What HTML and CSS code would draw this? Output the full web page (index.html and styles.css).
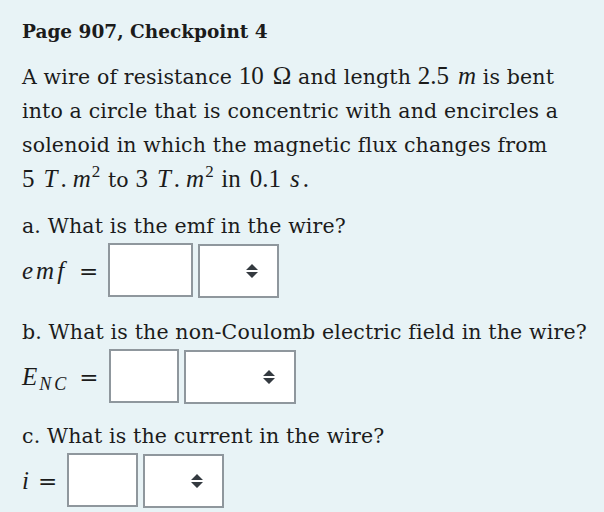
FILE: index.html
```html
<!DOCTYPE html>
<html>
<head>
<meta charset="utf-8">
<link rel="stylesheet" href="styles.css">
</head>
<body>
<main class="page">
  <h2 class="title">Page 907, Checkpoint 4</h2>
  <p class="stem">A wire of resistance <span class="m">10<span class="gap"></span>Ω</span> and length <span class="m">2.5<span class="gap"></span><i class="mi">m</i></span> is bent<br>into a circle that is concentric with and encircles a<br>solenoid in which the magnetic flux changes from<br><span class="m">5<i class="mi t">T</i><span class="dot">.</span><i class="mi mm">m</i><sup>2</sup></span> to <span class="m">3<i class="mi t">T</i><span class="dot">.</span><i class="mi mm">m</i><sup>2</sup></span> <span class="m">in<span class="gap"></span>0.1<span class="gap"></span><i class="mi">s</i><span class="dot">.</span></span></p>

  <section class="q qa">
    <p class="qtext">a. What is the emf in the wire?</p>
    <div class="row">
      <span class="lbl m"><i class="mi emf">emf</i><span class="eq">=</span></span>
      <span class="box w85"></span>
      <span class="sel w81"><svg class="arr" viewBox="0 0 12 14" width="12" height="14"><path d="M6 0 L12 6 L0 6 Z M0 8 L12 8 L6 14 Z" fill="#343a40"/></svg></span>
    </div>
  </section>

  <section class="q qb">
    <p class="qtext">b. What is the non-Coulomb electric field in the wire?</p>
    <div class="row">
      <span class="lbl m"><i class="mi bigE">E</i><sub><i class="mi nc">NC</i></sub><span class="eq">=</span></span>
      <span class="box w70"></span>
      <span class="sel w112"><svg class="arr" viewBox="0 0 12 14" width="12" height="14"><path d="M6 0 L12 6 L0 6 Z M0 8 L12 8 L6 14 Z" fill="#343a40"/></svg></span>
    </div>
  </section>

  <section class="q qc">
    <p class="qtext">c. What is the current in the wire?</p>
    <div class="row">
      <span class="lbl m"><i class="mi ii">i</i><span class="eq">=</span></span>
      <span class="box w71"></span>
      <span class="sel w81"><svg class="arr" viewBox="0 0 12 14" width="12" height="14"><path d="M6 0 L12 6 L0 6 Z M0 8 L12 8 L6 14 Z" fill="#343a40"/></svg></span>
    </div>
  </section>
</main>
</body>
</html>
```

FILE: styles.css
```css
html, body {
  margin: 0;
  padding: 0;
  background: #e8f3f6;
}
.page {
  padding: 16px 0 0 22px;
  font-family: "DejaVu Serif", serif;
  color: #1b1b1b;
}
.title {
  margin: 0;
  font-size: 18.5px;
  line-height: 32px;
  font-weight: bold;
}
.stem {
  margin: 11px 0 0 0;
  line-height: 34px;
  font-size: 20.5px;
  letter-spacing: 0.15px;
  white-space: nowrap;
}
.m {
  font-family: "Liberation Serif", serif;
  font-size: 25px;
  letter-spacing: 0;
}
.mi {
  font-style: italic;
}
.gap {
  display: inline-block;
  width: 9px;
}
.t {
  margin-left: 9px;
}
.dot {
  margin-left: 3px;
}
.mm {
  margin-left: 6px;
  margin-right: 1px;
}
.m sup {
  font-size: 17px;
  line-height: 0;
  vertical-align: 10px;
  margin-right: 1px;
}
.qtext {
  margin: 0;
  line-height: 30px;
  font-size: 20.5px;
  letter-spacing: 0.15px;
  white-space: nowrap;
}
.qa { margin-top: 14px; }
.qb { margin-top: 19px; }
.qc { margin-top: 17px; }
.row {
  display: flex;
  align-items: flex-start;
  height: 57px;
}
.lbl {
  display: flex;
  align-items: baseline;
  align-self: center;
  white-space: nowrap;
  padding-top: 2px;
}
.emf {
  letter-spacing: 3px;
  margin-right: 5px;
}
.bigE {
  margin-right: -2px;
  letter-spacing: 4px;
}
.lbl sub {
  font-size: 18px;
  line-height: 0;
  position: relative;
  top: 5px;
}
.nc {
  letter-spacing: 3px;
  margin-right: 3px;
}
.ii {
  margin-right: 2px;
}
.eq {
  font-family: "DejaVu Serif", serif;
  font-style: normal;
  font-size: 23px;
  margin-left: 7px;
  margin-right: 10px;
}
.box, .sel {
  box-sizing: border-box;
  height: 54px;
  background: #fff;
  border: 2px solid #8f979d;
}
.box {
  margin-top: 2px;
}
.sel {
  margin-top: 3px;
  margin-left: 5px;
  display: flex;
  align-items: center;
  justify-content: flex-end;
  padding-right: 19px;
}
.w85 { width: 85px; }
.w81 { width: 81px; }
.w70 { width: 70px; }
.w71 { width: 71px; }
.w112 { width: 112px; }
```
